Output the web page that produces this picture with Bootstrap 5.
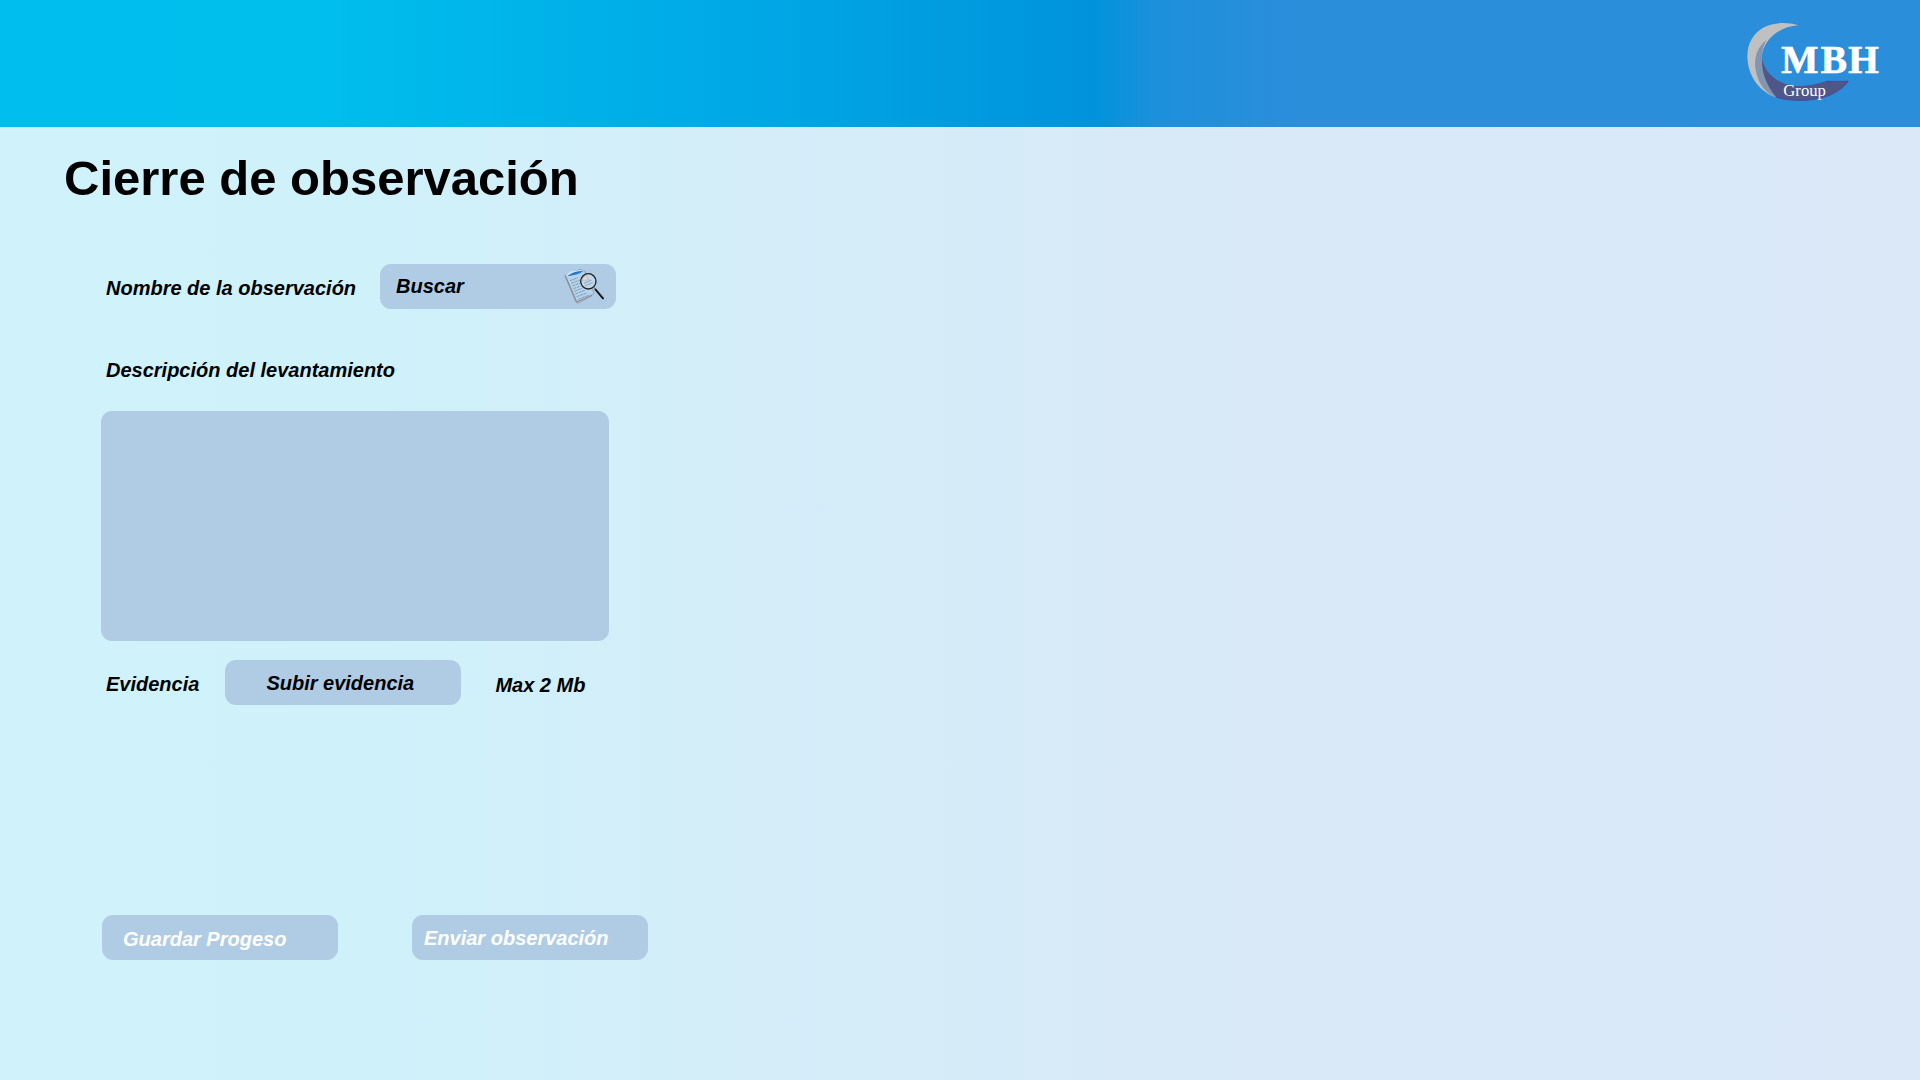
<!DOCTYPE html>
<html lang="es">
<head>
<meta charset="utf-8">
<meta name="viewport" content="width=device-width, initial-scale=1">
<title>Cierre de observación</title>
<link href="https://cdn.jsdelivr.net/npm/bootstrap@5.3.0/dist/css/bootstrap.min.css" rel="stylesheet">
<style>
  body {
    font-family: "Liberation Sans", Arial, sans-serif;
    font-size: 20px;
    line-height: 28px;
    color: #000;
    background: linear-gradient(90deg, #cff2fb 0%, #cff1fa 20%, #d4edf9 40%, #d9e9f8 66%, #dae8f8 100%);
  }
  .topbar {
    height: 127px;
    padding: 10px 20px;
    background: linear-gradient(90deg, #00bfee 0%, #00bfed 16%, #00a9e6 38%, #0093dc 57%, #1c90db 60%, #2a8edb 67%, #2a8edb 100%);
  }
  .page-title {
    font: bold 49px/58px "Liberation Sans", Arial, sans-serif;
    padding: 22px 64px 0;
  }
  .closing-form {
    padding: 57px 101px;
    font-weight: bold;
    font-style: italic;
  }
  .field-box {
    background: #b0cce5;
    border: 0;
    border-radius: 11px;
    font: inherit;
    color: #000;
  }
  .field-box::placeholder { color: #000; opacity: 1; }
  .field-box:focus { background: #b0cce5; }
  .fixed-size { width: 236px; height: 45px; padding: 0 16px; }
  .caption { padding: 2px 0 0 5px; }
  .search-row { gap: 24px; }
  .search-icon { position: absolute; right: 10px; top: 4px; }
  .desc-label { margin: 45px 0 27px; }
  .desc-box { max-width: 508px; height: 230px; resize: none; }
  .upload-row { margin-top: 19px; gap: 26px; }
  .upload-row .limit { padding: 4px 0 0 8px; }
  .upload-btn { padding-left: 41px; }
  .actions { margin-top: 210px; gap: 74px; padding-left: 1px; }
  .actions .field-box { color: #fff; }
  .save-btn { padding: 2px 0 0 21px; }
  .send-btn { padding-left: 12px; }
</style>
</head>
<body class="min-vh-100">
<header class="topbar d-flex justify-content-end">
  <a href="#" aria-label="MBH Group">
    <svg class="d-block" width="170" height="110" viewBox="0 0 510 330">
      <path d="M205 46C172 36 133 36 102 52C65 72 48 110 53 153C58 203 91 246 138 262C98 225 84 170 97 128C108 85 148 50 205 46Z" fill="#c0c0c0"/>
      <path d="M110 90C80 112 71 145 77 180C84 220 106 250 138 262L170 250C125 222 98 188 96 148C95 125 100 105 110 90Z" fill="#8495af"/>
      <path d="M96 148C106 190 140 220 190 227C228 231 256 224 288 214L355 214C330 245 290 268 225 271C190 272 160 269 138 261C110 225 95 190 96 148Z" fill="#4e5788"/>
      <path d="M288 214L355 214C330 245 290 268 225 271C190 272 160 269 138 261" fill="none" stroke="#4a4a9a" stroke-width="3"/>
      <g fill="#fff" font-family="Liberation Serif, serif">
        <text x="154 272 355" y="188" font-size="118" font-weight="bold" stroke="#fff" stroke-width="2">MBH</text>
        <text x="160" y="259" font-size="50">Group</text>
      </g>
    </svg>
  </a>
</header>

<main>
  <h1 class="page-title m-0">Cierre de observación</h1>

  <form class="closing-form">
    <div class="search-row d-flex align-items-center">
      <label class="caption" for="nombre">Nombre de la observación</label>
      <div class="position-relative">
        <input id="nombre" type="text" class="form-control field-box fixed-size" placeholder="Buscar">
        <svg class="search-icon" width="42" height="38" viewBox="0 0 126 114" aria-hidden="true">
          <path d="M3 23L48 4L62 9L90 77L43 106L35 101Z" fill="#b4d3ec" stroke="#8d9098" stroke-width="2"/>
          <path d="M4 23L38 102L84 82" fill="none" stroke="#8f8f96" stroke-width="4"/>
          <path d="M6 21L20 10L60 5L45 16L10 28Z" fill="#c9e4f7"/>
          <path d="M9 25C22 14 38 9 58 8C48 18 28 22 9 25Z" fill="#2578c4"/>
          <path d="M18 38L42 29M22 46L49 36M25 54L49 45M28 62L50 54M31 70L54 61M34 78L62 67M38 86L68 75M42 94L76 81" stroke="#829bb4" stroke-width="3" stroke-dasharray="9 2"/>
          <circle cx="73" cy="40" r="23" fill="#bfd7eb" stroke="#222" stroke-width="4"/>
          <path d="M53 38L65 21L74 35Z" fill="#edd6ca" stroke="#8b8790" stroke-width="1"/>
          <path d="M60 46L83 36M64 53L86 44" stroke="#8ca3b9" stroke-width="3"/>
          <path d="M89 58L96 66" stroke="#777" stroke-width="4"/>
          <path d="M95 65L117 91" stroke="#111" stroke-width="6" stroke-linecap="round"/>
          <path d="M98 64L117 87" stroke="#999" stroke-width="1"/>
        </svg>
      </div>
    </div>

    <label class="desc-label caption d-block" for="descripcion">Descripción del levantamiento</label>
    <textarea id="descripcion" class="form-control field-box desc-box"></textarea>

    <div class="upload-row d-flex align-items-center">
      <label class="caption" for="evidencia">Evidencia</label>
      <button id="evidencia" type="button" class="btn field-box fixed-size upload-btn text-start">Subir evidencia</button>
      <span class="limit">Max 2 Mb</span>
    </div>

    <div class="actions d-flex">
      <button type="button" class="btn field-box fixed-size save-btn text-start">Guardar Progeso</button>
      <button type="submit" class="btn field-box fixed-size send-btn text-start">Enviar observación</button>
    </div>
  </form>
</main>
<script src="https://cdn.jsdelivr.net/npm/bootstrap@5.3.0/dist/js/bootstrap.bundle.min.js"></script>
</body>
</html>
